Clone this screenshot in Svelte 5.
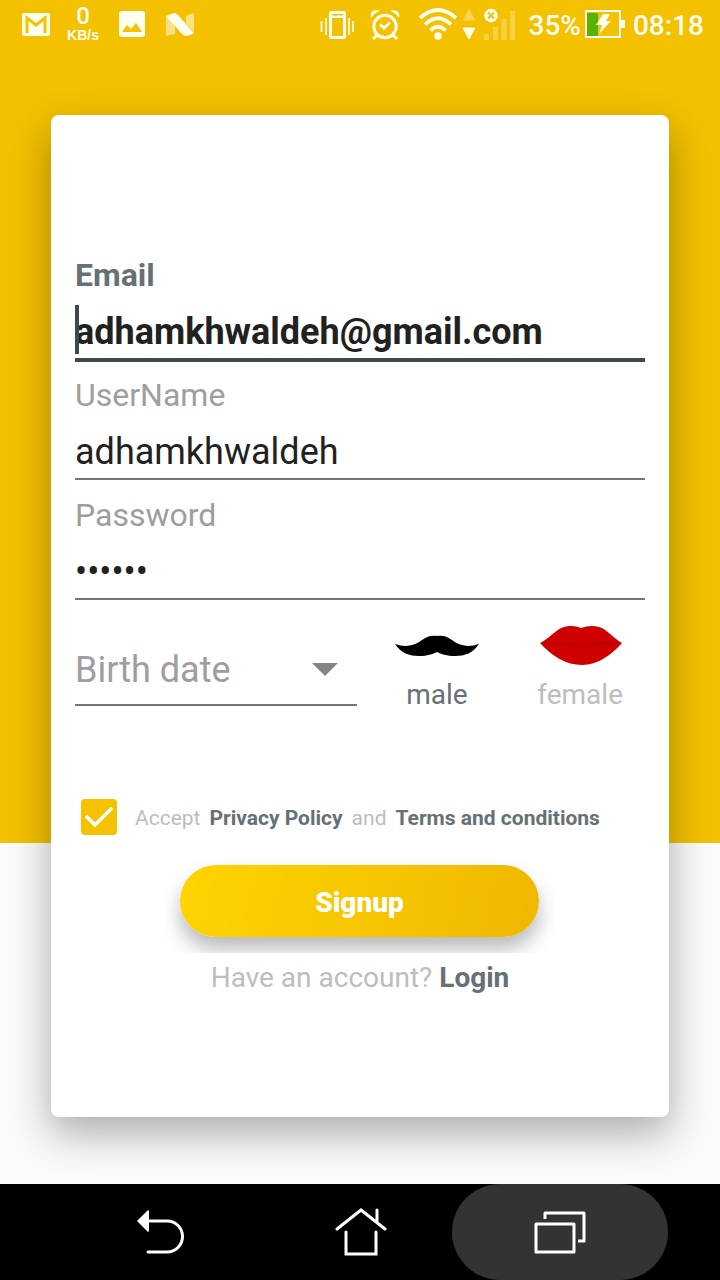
<script>
  let email = $state('adhamkhwaldeh@gmail.com');
  let username = $state('adhamkhwaldeh');
  let password = $state('secret');
  let birth = $state('');
  let gender = $state('male');
  let accepted = $state(true);
</script>

<div class="screen">
  <header class="status">
    <div class="notices">
      <svg width="28" height="26" viewBox="0 0 28 26" aria-hidden="true">
        <rect x="0" y="1" width="28" height="23" rx="2" fill="#fffdf0" />
        <path d="M5 21V6L14 13L23 6V21" fill="none" stroke="#f4c200" stroke-width="3" />
      </svg>
      <div class="speed"><span class="rate">0</span><span class="unit">KB/s</span></div>
      <svg width="32" height="28" viewBox="0 0 32 28" aria-hidden="true">
        <rect x="3" y="0" width="26" height="26" rx="3" fill="#fffdf0" />
        <path d="M6 21L11 14L15 18L20 12L26 21Z" fill="#f4c200" />
      </svg>
      <svg width="32" height="28" viewBox="-2 -1 32 28" aria-hidden="true">
        <path d="M0 4L9 10V22L0 24ZM28 1V20L20 11V4Z" fill="#fffdf0" opacity=".55" />
        <path d="M0 4Q5 2 8 1Q10 1 12 3L28 21Q24 24 20 24Q18 24 16 22Z" fill="#fffdf0" />
      </svg>
    </div>
    <div class="system">
      <svg width="34" height="36" viewBox="320 6 34 36" aria-hidden="true">
        <rect x="330.500" y="11.500" width="14" height="25" rx="1" fill="none" stroke="#fffdf0" stroke-width="3" />
        <path d="M332 15.500H343" stroke="#fffdf0" stroke-width="3" />
        <path d="M333 14H338M340 14H342" stroke="#f4c200" stroke-width="1.500" />
        <path d="M321.500 20V31M326 17V34M349 17V34M353 20V31" stroke="#fffdf0" stroke-width="1.700" />
      </svg>
      <svg class="alarm" width="30" height="36" viewBox="370 6 30 36" aria-hidden="true">
        <circle cx="385" cy="25.500" r="11.200" fill="none" stroke="#fffdf0" stroke-width="3" />
        <path d="M380 23.500L384 27L390 21.500" fill="none" stroke="#fffdf0" stroke-width="3" />
        <path d="M371 17Q369 8 380 9.500Q374.500 12 371 17ZM399 17Q401 8 390 9.500Q395.500 12 399 17Z" fill="#fffdf0" />
        <path d="M377 34L373 38M393 34L397 38" stroke="#fffdf0" stroke-width="3" />
      </svg>
      <svg width="98" height="36" viewBox="419 7 98 36" aria-hidden="true">
        <g fill="none" stroke="#fffdf0" stroke-width="3.800">
          <path d="M420 18Q438 2 456 18" />
          <path d="M425 24.500Q438 12 451 24.500" />
          <path d="M430.500 30.500Q438 23 445.500 30.500" />
        </g>
        <circle cx="438" cy="36" r="3.800" fill="#fffdf0" />
        <path d="M469 9L475.500 20.500H462.500Z" fill="#fffdf0" opacity=".35" />
        <path d="M463 28H475L469 39Z" fill="#fffdf0" stroke="#fffdf0" stroke-linejoin="round" />
        <path d="M484 34H489V40H484ZM493 27H498V40H493ZM501.500 19H506.500V40H501.500ZM510 11H515V40H510Z" fill="#fffdf0" opacity=".28" />
        <circle cx="491" cy="15.500" r="6.800" fill="#fffdf0" />
        <path d="M488 12.500L494 18.500M494 12.500L488 18.500" stroke="#f4c200" stroke-width="2" />
      </svg>
      <div class="power">
        <span>35%</span>
        <svg width="40" height="30" viewBox="0 0 40 30" aria-hidden="true">
          <rect x="1" y="1" width="34" height="26" fill="none" stroke="#fffdf0" stroke-width="2" />
          <rect x="36" y="10" width="4" height="8" fill="#fffdf0" />
          <rect x="2" y="3" width="11" height="23" fill="#59b200" />
          <path d="M18 4H25L21 11H26L14 24L17 15H11Z" fill="#fffdf0" />
        </svg>
      </div>
      <time>08:18</time>
    </div>
  </header>

  <main>
    <form class="card" onsubmit={(e) => e.preventDefault()}>
      <div class="field active">
        <label for="email">Email</label>
        <input id="email" type="email" bind:value={email} />
        <span class="caret"></span>
      </div>
      <div class="field">
        <label for="username">UserName</label>
        <input id="username" type="text" bind:value={username} />
      </div>
      <div class="field">
        <label for="password">Password</label>
        <input id="password" type="password" bind:value={password} />
      </div>

      <div class="details">
        <div class="birth">
          <select aria-label="Birth date" bind:value={birth}>
            <option value="">Birth date</option>
          </select>
          <svg width="26" height="13" viewBox="0 0 26 13" aria-hidden="true"><path d="M0 0H26L13 13Z" fill="#858585" /></svg>
        </div>
        <div class="genders">
          <label class="gender" class:chosen={gender === 'male'}>
            <input type="radio" name="gender" value="male" bind:group={gender} />
            <svg width="84" height="44" viewBox="0 -12 84 44" aria-hidden="true">
              <path d="M0 9C9 12 18 12 27 5C32 1 37 0 42 1C47 0 52 1 57 5C66 12 75 12 84 9C78 18 70 21 60 21C52 21 46 19 42 17C38 19 32 21 24 21C14 21 6 18 0 9Z" />
            </svg>
            <span>male</span>
          </label>
          <label class="gender" class:chosen={gender === 'female'}>
            <input type="radio" name="gender" value="female" bind:group={gender} />
            <svg width="84" height="44" viewBox="-2 -2 84 44" aria-hidden="true">
              <path d="M0 18C9 14 16 4 24 2C31 0 36 1 41 3C47 1 52 0 59 2C67 4 74 14 82 18C71 30 58 40 42 40C26 40 12 31 0 18Z" fill="#cf0000" />
              <path d="M2 18C16 17 28 18 34 19C39 21 46 21 50 19C58 17 70 17 80 18C70 19 60 20 51 21C46 23 39 23 34 21C25 20 14 19 2 18Z" fill="#b90000" />
            </svg>
            <span>female</span>
          </label>
        </div>
      </div>

      <div class="terms">
        <div class="tick">
          <input id="accept" type="checkbox" aria-label="Accept Privacy Policy and Terms and conditions" bind:checked={accepted} />
          {#if accepted}
            <svg width="36" height="36" viewBox="0 0 36 36" aria-hidden="true"><path d="M5 17L14 26L31 9" fill="none" stroke="#fff" stroke-width="3.500" /></svg>
          {/if}
        </div>
        <p>
          <label for="accept">Accept</label>
          <a href="#privacy">Privacy Policy</a>
          <span>and</span>
          <a href="#terms">Terms and conditions</a>
        </p>
      </div>

      <div class="action"><button type="submit">Signup</button></div>
      <p class="login">Have an account? <a href="#login">Login</a></p>
    </form>
  </main>

  <nav aria-label="System">
    <button type="button" aria-label="Back">
      <svg width="48" height="46" viewBox="-1 0 48 46" aria-hidden="true">
        <path d="M0 12L11 1Q12 1 12 3V21Q12 23 11 23Z" fill="#fff" />
        <path d="M11 12H30A15.500 15.500 0 0 1 30 43H11" fill="none" stroke="#fff" stroke-width="3" stroke-linecap="round" />
      </svg>
    </button>
    <button type="button" aria-label="Home">
      <svg width="54" height="48" viewBox="0 1 54 48" aria-hidden="true">
        <path d="M4 22L28 3L52 22M44 3V15M13 25V47H43V25" fill="none" stroke="#fff" stroke-width="3" stroke-linecap="round" />
      </svg>
    </button>
    <button type="button" class="pressed" aria-label="Recent apps">
      <svg width="52" height="44" viewBox="0 0 52 44" aria-hidden="true">
        <path d="M2 14H40V42H2ZM11 9V3H50V31H44" fill="none" stroke="#fff" stroke-width="3" stroke-linejoin="round" />
      </svg>
    </button>
  </nav>
</div>

<style>
  :global(body) {
    margin: 0;
  }

  .screen {
    display: flex;
    flex-direction: column;
    min-height: 100vh;
    font-family: Roboto, sans-serif;
    background: linear-gradient(#f3c100 0 843px, #fafafa 843px);
  }

  .screen * {
    box-sizing: border-box;
  }

  svg {
    display: block;
    flex: none;
  }

  button,
  input,
  select {
    font-family: inherit;
  }

  .status {
    display: flex;
    align-items: center;
    justify-content: space-between;
    height: 50px;
    padding: 0 16px 0 22px;
    color: #fffdf0;
    font-size: 28px;
    font-weight: 500;
  }

  .notices,
  .system,
  .power {
    display: flex;
    align-items: center;
  }

  .notices {
    gap: 16px;
  }

  .speed {
    display: flex;
    flex-direction: column;
    align-items: center;
    width: 34px;
    padding-bottom: 4px;
  }

  .rate {
    font-size: 24px;
    line-height: 24px;
  }

  .unit {
    font: bold 14px/14px "Liberation Sans", sans-serif;
  }

  .alarm {
    margin: 0 19px 0 16px;
  }

  .power {
    gap: 4px;
    margin: 0 8px 0 12px;
  }

  main {
    flex: 1;
    padding: 65px 51px 67px;
  }

  .card {
    padding: 127px 24px 122px;
    border-radius: 8px;
    background: #fff;
    box-shadow: 0 16px 40px rgba(0, 0, 0, 0.32);
  }

  .field {
    position: relative;
    height: 120px;
    padding-top: 14px;
  }

  .field label {
    display: block;
    color: #9e9e9e;
    font-size: 32px;
    line-height: 38px;
  }

  .field input {
    display: block;
    width: 100%;
    height: 66px;
    padding: 12px 0 0;
    border: 0;
    border-bottom: 2px solid #757575;
    border-radius: 0;
    outline: 0;
    background: none;
    color: #212121;
    font-size: 36px;
  }

  .field.active label {
    color: #667075;
    font-weight: 700;
  }

  .field.active input {
    height: 68px;
    border-bottom: 4px solid #3f484a;
    font-weight: 700;
  }

  .caret {
    position: absolute;
    top: 63px;
    left: 0;
    width: 4px;
    height: 49px;
    background: #3f484a;
  }

  .details {
    display: grid;
    grid-template-columns: 282fr 288fr;
    align-items: end;
    padding-top: 21px;
  }

  .birth {
    position: relative;
    margin-bottom: 5px;
  }

  .birth select {
    display: block;
    width: 100%;
    height: 72px;
    padding: 2px 0 0;
    appearance: none;
    border: 0;
    border-bottom: 2px solid #757575;
    border-radius: 0;
    background: none;
    color: #9e9e9e;
    font-size: 36px;
  }

  .birth svg {
    position: absolute;
    top: 29px;
    right: 19px;
    pointer-events: none;
  }

  .genders {
    display: flex;
    justify-content: space-between;
    padding: 0 22px 0 38px;
  }

  .gender {
    display: flex;
    flex-direction: column;
    align-items: center;
    gap: 12px;
    color: #bdbdbd;
    font-size: 28px;
    line-height: 32px;
  }

  .gender.chosen {
    color: #667075;
  }

  .gender input {
    position: absolute;
    opacity: 0;
    pointer-events: none;
  }

  .terms {
    display: flex;
    align-items: center;
    gap: 18px;
    margin-top: 88px;
    padding-left: 6px;
  }

  .tick {
    position: relative;
  }

  .tick input {
    display: block;
    width: 36px;
    height: 36px;
    margin: 0;
    appearance: none;
    border: 2px solid #f4c200;
    border-radius: 4px;
  }

  .tick input:checked {
    background: #f4c200;
  }

  .tick svg {
    position: absolute;
    inset: 0;
    pointer-events: none;
  }

  .terms p {
    display: flex;
    flex-wrap: wrap;
    gap: 0 9px;
    margin: 0;
    padding-top: 2px;
    color: #bdbdbd;
    font-size: 21px;
    line-height: 26px;
  }

  a {
    color: #667075;
    font-weight: 700;
    text-decoration: none;
  }

  .action {
    margin: 22px 90px 0 89px;
    padding: 8px 16px 16px;
    overflow: hidden;
  }

  .action button {
    display: block;
    width: 100%;
    height: 72px;
    padding: 2px 0 0;
    border: 0;
    border-radius: 36px;
    background: linear-gradient(100deg, #ffd400, #efb800);
    box-shadow: 0 12px 20px rgba(0, 0, 0, 0.28);
    color: #fff;
    font-size: 28px;
    font-weight: 900;
  }

  .login {
    margin: 8px 0 0;
    color: #bdbdbd;
    font-size: 28px;
    line-height: 34px;
    text-align: center;
  }

  nav {
    display: flex;
    justify-content: center;
    height: 96px;
    background: #000;
  }

  nav button {
    display: flex;
    align-items: center;
    justify-content: center;
    width: 216px;
    margin: 0 -8px;
    padding: 0;
    border: 0;
    border-radius: 48px;
    background: none;
  }

  nav .pressed {
    background: #333;
  }
</style>
